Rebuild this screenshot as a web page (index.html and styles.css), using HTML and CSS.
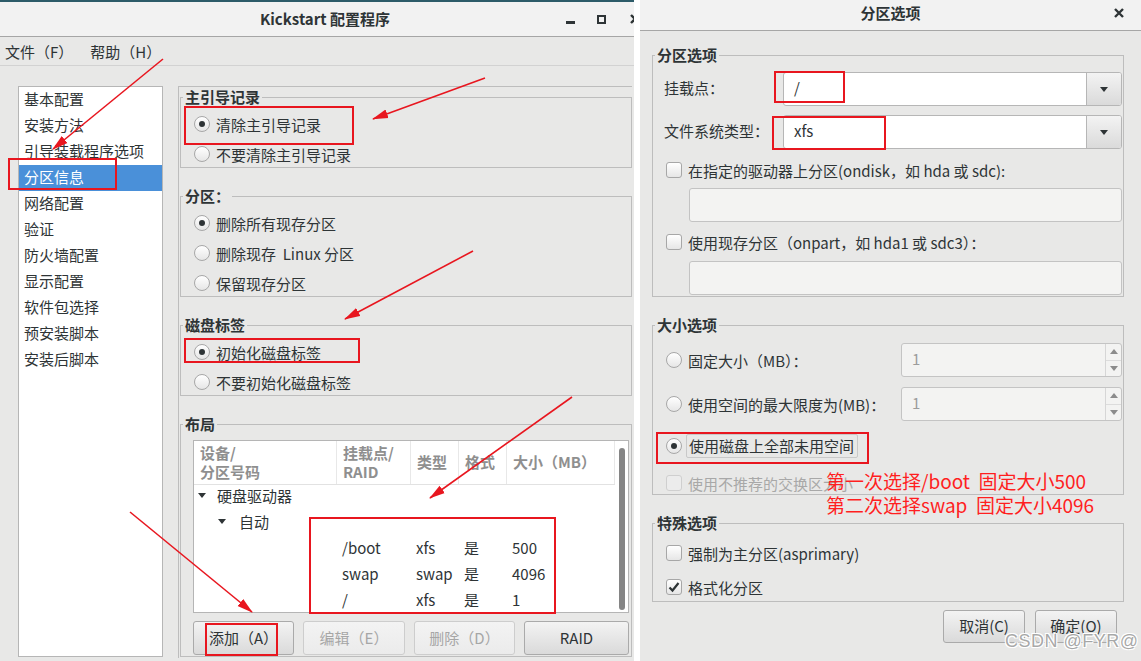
FILE: index.html
```html
<!DOCTYPE html>
<html lang="zh-CN">
<head>
  <meta charset="UTF-8">
  <title>Kickstart 配置程序</title>
  <link rel="stylesheet" href="styles.css">
</head>
<body>
<div class="screen">

  <!-- 主窗口 -->
  <div class="window main-window">
    <div class="titlebar">
      <span></span>
      <span class="title">Kickstart 配置程序</span>
      <div class="win-controls">
        <span class="ctl-min"></span>
        <span class="ctl-max"></span>
        <svg class="ctl-close" width="10" height="10" viewBox="0 0 10 10"><path d="M1 1 L9 9 M9 1 L1 9" stroke="#2e3436" stroke-width="2.4"/></svg>
      </div>
    </div>
    <div class="menubar">
      <span>文件（F）</span>
      <span>帮助（H）</span>
    </div>

    <div class="workarea">
      <ul class="sidebar">
        <li>基本配置</li>
        <li>安装方法</li>
        <li>引导装载程序选项</li>
        <li class="sel">分区信息</li>
        <li>网络配置</li>
        <li>验证</li>
        <li>防火墙配置</li>
        <li>显示配置</li>
        <li>软件包选择</li>
        <li>预安装脚本</li>
        <li>安装后脚本</li>
      </ul>

      <div class="panel">
        <fieldset class="frame">
          <legend>主引导记录</legend>
          <div class="frame-body">
            <label class="opt"><span class="radio on"></span>清除主引导记录</label>
            <label class="opt"><span class="radio"></span>不要清除主引导记录</label>
          </div>
        </fieldset>

        <fieldset class="frame">
          <legend>分区：</legend>
          <div class="frame-body">
            <label class="opt"><span class="radio on"></span>删除所有现存分区</label>
            <label class="opt"><span class="radio"></span>删除现存&nbsp; Linux 分区</label>
            <label class="opt"><span class="radio"></span>保留现存分区</label>
          </div>
        </fieldset>

        <fieldset class="frame">
          <legend>磁盘标签</legend>
          <div class="frame-body">
            <label class="opt"><span class="radio on"></span>初始化磁盘标签</label>
            <label class="opt"><span class="radio"></span>不要初始化磁盘标签</label>
          </div>
        </fieldset>

        <fieldset class="frame">
          <legend>布局</legend>
          <div class="layout-body">
            <div class="tree">
              <div class="tree-main">
                <div class="tree-head">
                  <div class="th">设备/<br>分区号码</div>
                  <div class="th">挂载点/<br>RAID</div>
                  <div class="th">类型</div>
                  <div class="th">格式</div>
                  <div class="th">大小（MB）</div>
                </div>
                <div class="tree-rows">
                  <div class="tree-row lvl1"><span class="expander"></span>硬盘驱动器</div>
                  <div class="tree-row lvl2"><span class="expander"></span>自动</div>
                  <div class="tree-row data">
                    <span></span><span>/boot</span><span>xfs</span><span>是</span><span>500</span>
                  </div>
                  <div class="tree-row data">
                    <span></span><span>swap</span><span>swap</span><span>是</span><span>4096</span>
                  </div>
                  <div class="tree-row data">
                    <span></span><span>/</span><span>xfs</span><span>是</span><span>1</span>
                  </div>
                </div>
              </div>
              <div class="tree-scroll"><div class="thumb"></div></div>
            </div>
            <div class="layout-buttons">
              <button class="btn">添加（A）</button>
              <button class="btn" disabled>编辑（E）</button>
              <button class="btn" disabled>删除（D）</button>
              <button class="btn">RAID</button>
            </div>
          </div>
        </fieldset>
      </div>
    </div>
  </div>

  <!-- 分区选项对话框 -->
  <div class="window dialog">
    <div class="titlebar">
      <span></span>
      <span class="title">分区选项</span>
      <div class="win-controls">
        <svg class="dlg-close" width="10" height="10" viewBox="0 0 10 10"><path d="M1 1 L9 9 M9 1 L1 9" stroke="#2e3436" stroke-width="2.4"/></svg>
      </div>
    </div>

    <div class="dialog-body">
      <fieldset class="frame">
        <legend>分区选项</legend>
        <div class="dlg-frame-body first">
          <div class="combo-grid">
            <span class="lbl">挂载点：</span>
            <div class="combo"><span class="combo-text">/</span><span class="combo-btn"></span></div>
            <span class="lbl">文件系统类型：</span>
            <div class="combo"><span class="combo-text">xfs</span><span class="combo-btn"></span></div>
          </div>
          <label class="opt check-row ondisk"><span class="check"></span>在指定的驱动器上分区(ondisk，如 hda 或 sdc):</label>
          <div class="entry entry-1"></div>
          <label class="opt check-row onpart"><span class="check"></span>使用现存分区（onpart，如 hda1 或 sdc3）：</label>
          <div class="entry entry-2"></div>
        </div>
      </fieldset>

      <fieldset class="frame">
        <legend>大小选项</legend>
        <div class="dlg-frame-body size">
          <div class="size-grid">
            <label class="opt"><span class="radio"></span>固定大小（MB）：</label>
            <div class="spin"><span class="spin-val">1</span><span class="spin-btns"><span class="up"></span><span class="down"></span></span></div>
            <label class="opt"><span class="radio"></span>使用空间的最大限度为(MB)：</label>
            <div class="spin"><span class="spin-val">1</span><span class="spin-btns"><span class="up"></span><span class="down"></span></span></div>
          </div>
          <label class="opt row-all"><span class="radio on"></span><span class="focus">使用磁盘上全部未用空间</span></label>
          <label class="opt row-swap disabled"><span class="check"></span>使用不推荐的交换区大小</label>
        </div>
      </fieldset>

      <fieldset class="frame">
        <legend>特殊选项</legend>
        <div class="dlg-frame-body special">
          <label class="opt"><span class="check"></span>强制为主分区(asprimary)</label>
          <label class="opt"><span class="check on"><svg width="14" height="14" viewBox="0 0 14 14"><path d="M2.5 7.5 L5.5 10.5 L11.5 3" stroke="#2e3436" stroke-width="2.2" fill="none"/></svg></span>格式化分区</label>
        </div>
      </fieldset>

      <div class="dialog-buttons">
        <button class="btn">取消(C)</button>
        <button class="btn">确定(O)</button>
      </div>
    </div>
  </div>

  <!-- 标注 -->
  <svg class="marks" width="1141" height="661" viewBox="0 0 1141 661">
    <defs>
      <marker id="ah" markerWidth="16" markerHeight="10" refX="15" refY="5" orient="auto" markerUnits="userSpaceOnUse">
        <path d="M0,0.5 L16,5 L0,9.5 z" fill="#e8161f"/>
      </marker>
    </defs>
    <g fill="none" stroke="#e8161f" stroke-width="2">
      <rect x="185" y="107" width="168" height="37"/>
      <rect x="9" y="159" width="107" height="30"/>
      <rect x="185" y="339" width="174" height="23"/>
      <rect x="310" y="518" width="245" height="95"/>
      <rect x="206" y="624" width="71" height="31"/>
      <rect x="775" y="72" width="69" height="30"/>
      <rect x="773" y="117" width="112" height="32"/>
      <rect x="657" y="433" width="211" height="30"/>
    </g>
    <g stroke="#e8161f" stroke-width="1.6" marker-end="url(#ah)">
      <line x1="163" y1="59" x2="53" y2="149"/>
      <line x1="485" y1="78" x2="373" y2="119"/>
      <line x1="473" y1="251" x2="345" y2="319"/>
      <line x1="572" y1="397" x2="430" y2="498"/>
      <line x1="130" y1="512" x2="252" y2="612"/>
    </g>
  </svg>

  <div class="note">第一次选择/boot  固定大小500
第二次选择swap  固定大小4096</div>
  <div class="watermark">CSDN @FYR@</div>
</div>
</body>
</html>
```

FILE: styles.css
```css
* {
  box-sizing: border-box;
}

body {
  margin: 0;
  background: #fff;
  font-family: "Noto Sans CJK SC", "Noto Sans", sans-serif;
  font-size: 15px;
  color: #2e3436;
}

.screen {
  position: relative;
  width: 1141px;
  height: 661px;
  display: flex;
  gap: 6px;
  overflow: hidden;
}

.window {
  height: 661px;
  background: #e8e8e7;
  overflow: hidden;
}

.main-window {
  width: 634px;
  border-top: 2px solid #2d5b69;
}

.dialog {
  width: 501px;
}

/* 标题栏 */
.titlebar {
  display: grid;
  grid-template-columns: 1fr auto 1fr;
  align-items: center;
  height: 35px;
  background: #f2f2f2;
  border-bottom: 1px solid #a6a6a6;
  padding-left: 16px;
}

.title {
  font-weight: bold;
  line-height: 20px;
}

.win-controls {
  display: flex;
  justify-content: flex-end;
  align-items: center;
}

.ctl-min {
  width: 9px;
  height: 3px;
  background: #2e3436;
  margin-top: 6px;
}

.ctl-max {
  width: 9px;
  height: 9px;
  border: 2px solid #2e3436;
  margin-left: 22px;
}

.ctl-close {
  margin-left: 24px;
  margin-right: -6px;
}

.dialog .titlebar {
  height: 31px;
  padding-left: 0;
  padding-bottom: 5px;
}

.dlg-close {
  margin-right: 17px;
}

/* 菜单 */
.menubar {
  display: flex;
  align-items: center;
  gap: 17px;
  height: 29px;
  padding-left: 5px;
  border-bottom: 1px solid #d2d2d2;
}

.workarea {
  display: flex;
  gap: 15px;
  padding: 20px 2px 0 18px;
}

.sidebar {
  list-style: none;
  margin: 0;
  padding: 0;
  width: 145px;
  height: 571px;
  background: #fff;
  border: 1px solid #b6b6b6;
}

.sidebar li {
  height: 26px;
  line-height: 24px;
  padding-left: 5px;
}

.sidebar li.sel {
  background: #4a90d9;
  color: #fff;
}

.panel {
  width: 454px;
  height: 572px;
  border-top: 1px solid #bdbdbd;
  border-left: 1px solid #bdbdbd;
  padding-top: 1px;
}

/* 分组框 */
.frame {
  margin: 0 0 0 1px;
  padding: 0;
  min-width: 0;
  border: 1px solid #bdbdbd;
}

.frame + .frame {
  margin-top: 19px;
}

.frame legend {
  margin-left: 2px;
  padding: 0 2px;
  font-weight: bold;
  line-height: 18px;
}

.frame-body {
  display: flex;
  flex-direction: column;
  gap: 4px;
  padding: 5px 0 0 13px;
}

.opt {
  display: flex;
  align-items: center;
  gap: 6px;
  height: 26px;
  white-space: nowrap;
}

.radio,
.check {
  flex: none;
  width: 16px;
  height: 16px;
  border: 1px solid #a7a7a7;
  background: linear-gradient(#ffffff, #e6e6e6);
  position: relative;
}

.radio {
  border-radius: 50%;
}

.radio.on::after {
  content: "";
  position: absolute;
  left: 4px;
  top: 4px;
  width: 6px;
  height: 6px;
  border-radius: 50%;
  background: #2e3436;
}

.check {
  border-radius: 3px;
}

.check svg {
  display: block;
}

/* 布局 */
.layout-body {
  padding: 7px 2px 1px 12px;
}

.tree {
  display: flex;
  height: 173px;
  background: #fff;
  border: 1px solid #b5b5b5;
  overflow: hidden;
}

.tree-main {
  flex: 1;
}

.tree-head,
.tree-row.data {
  display: grid;
  grid-template-columns: 143px 74px 48px 48px 1fr;
}

.tree-head {
  height: 44px;
  border-bottom: 1px solid #e2e2e2;
  color: #8f8f8f;
  font-weight: bold;
}

.th {
  display: flex;
  align-items: center;
  padding: 0 0 2px 6px;
  line-height: 19px;
  border-right: 1px solid #e8e8e8;
}

.tree-rows {
  margin-top: -3px;
}

.tree-row {
  display: flex;
  align-items: center;
  height: 26px;
}

.tree-row.data {
  align-items: center;
}

.tree-row.data span {
  padding-left: 5px;
}

.lvl1 {
  padding-left: 4px;
  gap: 11px;
}

.lvl2 {
  padding-left: 24px;
  gap: 13px;
}

.expander {
  width: 0;
  height: 0;
  border-left: 4.5px solid transparent;
  border-right: 4.5px solid transparent;
  border-top: 5px solid #2e3436;
}

.tree-scroll {
  width: 13px;
  padding: 7px 0 0 4px;
}

.thumb {
  width: 6px;
  height: 162px;
  border-radius: 3px;
  background: #858585;
}

.layout-buttons {
  display: grid;
  grid-template-columns: 101px 102px 101px 1fr;
  gap: 9px;
  margin-top: 8px;
}

.btn {
  height: 34px;
  font-family: inherit;
  font-size: 15px;
  color: #2e3436;
  border: 1px solid #aaaaaa;
  border-radius: 3px;
  background: linear-gradient(#f3f3f3, #dadada);
  padding: 0 0 2px;
}

.btn:disabled {
  color: #a6a6a6;
  border-color: #cdcdcd;
  background: linear-gradient(#f3f3f3, #ebebeb);
}

/* 对话框 */
.dialog-body {
  padding: 15px 17px 0 11px;
}

.dlg-frame-body {
  padding: 8px 1px 1px 11px;
}

.combo-grid {
  display: grid;
  grid-template-columns: 119px 1fr;
  row-gap: 9px;
  align-items: center;
}

.lbl {
  padding-bottom: 3px;
}

.combo {
  display: flex;
  height: 34px;
  background: #fff;
  border: 1px solid #b6b6b6;
  border-radius: 3px;
  overflow: hidden;
}

.combo-text {
  flex: 1;
  padding-left: 10px;
  line-height: 30px;
}

.combo-btn {
  width: 35px;
  border-left: 1px solid #b6b6b6;
  background: linear-gradient(#f3f3f3, #dadada);
  display: flex;
  justify-content: center;
  align-items: center;
}

.combo-btn::before {
  content: "";
  border-left: 4.5px solid transparent;
  border-right: 4.5px solid transparent;
  border-top: 5px solid #2e3436;
}

.check-row {
  height: 22px;
  padding-left: 2px;
}

.ondisk {
  margin-top: 10px;
}

.onpart {
  margin-top: 9px;
}

.entry {
  height: 34px;
  margin-left: 25px;
  background: #f3f3f2;
  border: 1px solid #c3c3c3;
  border-radius: 3px;
}

.entry-1 {
  margin-top: 7px;
}

.entry-2 {
  margin-top: 8px;
}

.size {
  padding-top: 9px;
}

.size-grid {
  display: grid;
  grid-template-columns: 1fr 221px;
  row-gap: 10px;
  align-items: center;
}

.size .opt {
  padding-left: 2px;
}

.spin {
  display: flex;
  height: 34px;
  background: #f3f3f2;
  border: 1px solid #c4c4c4;
  border-radius: 3px;
}

.spin-val {
  flex: 1;
  padding-left: 10px;
  line-height: 30px;
  color: #9c9c9c;
}

.spin-btns {
  width: 16px;
  border-left: 1px solid #d6d6d6;
  display: flex;
  flex-direction: column;
}

.spin-btns span {
  flex: 1;
  display: flex;
  justify-content: center;
  align-items: center;
}

.spin-btns .up {
  border-bottom: 1px solid #dcdcdc;
}

.spin-btns .up::before {
  content: "";
  border-left: 4.5px solid transparent;
  border-right: 4.5px solid transparent;
  border-bottom: 5px solid #8c8c8c;
}

.spin-btns .down::before {
  content: "";
  border-left: 4.5px solid transparent;
  border-right: 4.5px solid transparent;
  border-top: 5px solid #8c8c8c;
}

.row-all {
  height: 24px;
  margin-top: 13px;
  gap: 4px;
}

.focus {
  line-height: 22px;
  padding: 0 3px 0 2px;
  border: 1px solid #c9c9c9;
  border-radius: 2px;
}

.row-swap {
  height: 20px;
  margin-top: 15px;
}

.disabled {
  color: #a8a8a8;
}

.disabled .check {
  border-color: #cfcfcf;
  background: #ececec;
}

.special {
  display: flex;
  flex-direction: column;
  gap: 14px;
  padding: 11px 1px 4px 11px;
}

.special .opt {
  height: 20px;
  padding-left: 2px;
}

.dialog-buttons {
  display: flex;
  justify-content: flex-end;
  gap: 10px;
  margin: 8px 7px 0 0;
}

.dialog-buttons .btn {
  width: 82px;
  height: 33px;
}

/* 标注层 */
.marks {
  position: absolute;
  left: 0;
  top: 0;
  pointer-events: none;
}

.note {
  position: absolute;
  left: 826px;
  top: 469px;
  font-size: 19px;
  line-height: 24px;
  color: #ff1f1f;
  white-space: pre;
}

.watermark {
  position: absolute;
  left: 1005px;
  top: 631px;
  font-family: "Liberation Sans", sans-serif;
  font-size: 18px;
  color: rgba(140, 140, 140, 0.75);
  text-shadow: 1px 1px 0 #fff, -1px -1px 0 #fff, 1px -1px 0 #fff, -1px 1px 0 #fff;
  letter-spacing: 0.5px;
}
```
